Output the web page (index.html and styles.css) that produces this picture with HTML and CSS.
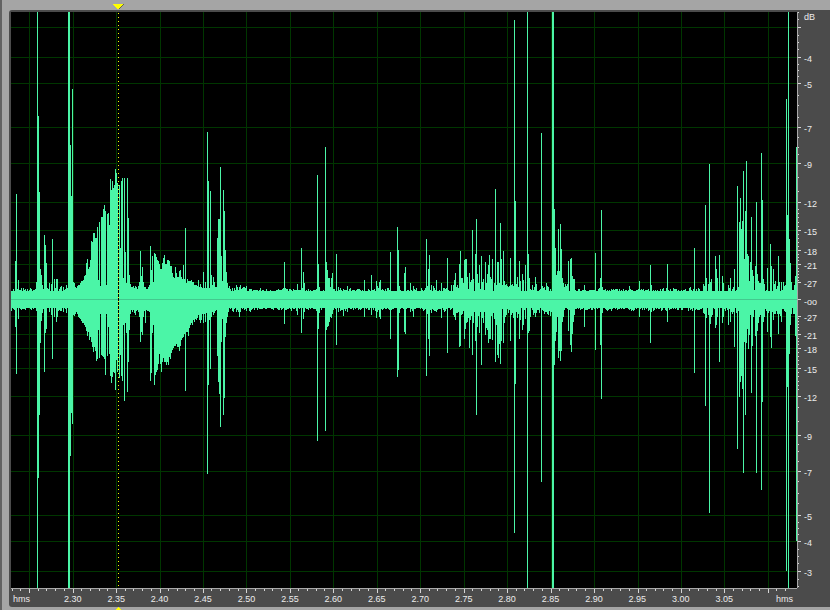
FILE: index.html
```html
<!DOCTYPE html>
<html lang="en">
<head>
<meta charset="utf-8">
<title>Waveform</title>
<link rel="stylesheet" href="styles.css">
</head>
<body>
<main class="panel">
  <section class="plot" aria-label="Audio waveform">
    <svg class="wave" viewBox="11 12 786 576" preserveAspectRatio="none" aria-hidden="true">
      <path class="grid" id="grid"/>
      <path class="signal" id="signal"/>
      <path class="center" d="M11 299h786v1H11z"/>
    </svg>
    <div class="cursor">
      <svg class="handle" viewBox="0 0 11 6" aria-hidden="true"><path class="handle-edge" d="M1 0h10L6 6z"/><path d="M0 0h10L5.500 5h-1z"/></svg>
      <svg class="handle-bottom" viewBox="0 0 5 3" aria-hidden="true"><path d="M2 0h1v1h1v1h1v1H0V2h1V1h1z"/></svg>
    </div>
  </section>
  <aside class="levels">
    <svg class="level-ticks" viewBox="0 12 4 576" preserveAspectRatio="none" aria-hidden="true"><path id="levelTicks"/></svg>
    <div class="level-labels" id="levelLabels"></div>
  </aside>
  <footer class="timeline">
    <svg class="time-ticks" viewBox="11 0 786 5" preserveAspectRatio="none" aria-hidden="true"><path class="axis" d="M11 0h786v1H11z"/><path id="timeTicks"/></svg>
    <div class="time-labels" id="timeLabels"></div>
  </footer>
</main>
<script src="wave.js"></script>
</body>
</html>
```
FILE: styles.css
```css
* {
  box-sizing: border-box;
}

body {
  margin: 0;
  min-height: 100vh;
  display: grid;
  padding: 10px 0 3px 7px;
  border-left: 2px solid #626262;
  background: #a5a5a5;
  color: #ececec;
  font-family: "Liberation Sans", Arial, sans-serif;
  font-size: 9px;
}

.panel {
  display: grid;
  grid-template-columns: minmax(0, 1fr) 33px;
  grid-template-rows: minmax(0, 1fr) 19px;
  padding: 2px 0 0 2px;
  border-radius: 3px 0 0 3px;
  background: #4b4b4b;
}

svg {
  display: block;
  shape-rendering: crispEdges;
}

.plot {
  position: relative;
  min-height: 0;
  background: #000;
}

.wave {
  position: absolute;
  inset: 0;
  width: 100%;
  height: 100%;
}

.grid {
  fill: #003600;
}

.signal {
  fill: #4bf5a7;
}

.center {
  fill: #43c88e;
}

.cursor {
  position: absolute;
  top: 0;
  bottom: 0;
  left: 13.613%;
  width: 1px;
  background: repeating-linear-gradient(to bottom, #000 0 1px, #ff0 1px 2px, #000 2px 4px);
}

.handle,
.handle-bottom {
  position: absolute;
  fill: #ff0;
}

.handle {
  top: -8px;
  left: -5px;
  width: 11px;
  height: 6px;
}

.handle-edge {
  fill: #66664a;
}

.handle-bottom {
  bottom: -22px;
  left: -2px;
  width: 5px;
  height: 3px;
}

.levels {
  display: flex;
  gap: 3px;
  border-left: 1px solid #a8a8a8;
  min-height: 0;
}

.level-ticks {
  width: 3px;
  height: 100%;
  fill: #d5d5d5;
}

.level-labels {
  display: flex;
  flex-direction: column;
}

.level-labels span {
  flex-basis: 0;
  min-height: 0;
  line-height: 10px;
}

.timeline {
  min-width: 0;
}

.time-ticks {
  width: 100%;
  height: 5px;
  fill: #d5d5d5;
}

.axis {
  fill: #a8a8a8;
}

.time-labels {
  display: grid;
  grid-template-columns: 400fr repeat(16, 434fr) 510fr;
  line-height: 12px;
  text-align: center;
}

.time-labels span:first-child {
  padding-left: 2px;
  text-align: left;
}

.time-labels span:last-child {
  padding-right: 4px;
  text-align: right;
}
```
FILE: wave.js
```js
// Columns that rise out of the noise floor: x, top, bottom.
const peaks = `
15 261 327,16 194 374,18 280 319,36 282 311,37 12 588,38 116 478,39 192 415,40 269 343,41 275 321,42 285 313,
44 235 372,45 245 333,46 263 329,49 283 312,51 284 315,52 239 359,54 279 317,56 279 322,57 279 317,60 287 311,61 286 311,63 287 312,66 285 313,
68 12 588,69 12 588,70 145 456,71 196 413,72 89 424,73 282 315,74 283 316,75 287 314,76 288 312,77 286 314,78 285 317,79 285 318,
80 283 319,81 281 321,82 281 323,83 280 323,84 276 325,85 275 327,86 263 331,87 259 336,88 269 332,89 267 340,90 260 337,91 241 342,
92 242 347,93 233 352,94 233 347,95 238 351,96 238 361,97 227 359,98 280 330,99 222 358,100 286 314,101 217 355,102 217 356,103 209 357,
104 205 359,105 211 375,106 285 314,107 214 356,108 213 327,109 225 354,110 179 376,111 190 383,112 181 377,113 188 372,114 185 373,
115 169 390,116 173 360,117 183 372,118 185 360,119 185 378,120 248 355,121 181 376,122 178 381,123 278 325,124 178 401,125 252 323,
126 283 333,127 178 392,128 218 362,129 275 330,130 284 314,
131 287 310,132 287 312,133 286 310,134 288 313,135 286 315,136 287 311,137 289 310,138 286 312,139 282 317,140 251 342,141 276 332,142 267 335,143 282 317,144 287 311,145 287 323,146 289 310,148 287 311,149 285 312,
150 246 381,151 270 373,152 256 333,153 282 325,154 253 385,155 254 375,156 257 372,157 260 370,158 261 364,159 264 354,160 269 364,
161 269 372,162 263 362,163 258 358,164 255 362,165 264 362,166 264 365,167 260 362,168 260 365,169 261 357,170 266 359,171 266 353,
172 273 350,173 277 348,174 278 346,175 267 346,176 273 344,177 277 347,178 277 347,179 271 351,180 270 346,181 277 340,182 279 338,
183 265 337,184 279 334,185 228 391,186 283 332,187 279 332,188 281 336,189 281 328,190 281 325,191 280 323,192 282 325,193 282 320,
194 285 322,195 285 319,196 285 320,197 286 318,198 280 315,199 287 320,200 284 323,201 287 320,202 288 314,203 272 323,204 288 314,
205 282 322,206 288 313,207 132 474,208 181 385,209 288 320,210 191 369,211 275 317,212 285 312,213 277 315,214 282 313,215 287 311,216 287 310,
217 238 356,218 219 382,219 219 394,220 167 427,221 256 342,222 281 319,223 190 415,224 211 398,225 250 337,226 272 323,227 283 317,228 288 312,
236 285 312,239 287 317,240 285 312,246 286 311,284 262 324,285 288 310,297 284 315,301 248 333,303 272 319,304 283 312,317 175 441,318 264 329,319 287 313,
325 147 431,326 262 330,327 270 327,328 278 326,329 278 322,330 287 317,331 278 318,332 273 314,336 254 345,338 287 312,343 289 316,347 286 312,
364 280 317,371 275 315,376 281 318,377 286 312,379 282 317,380 280 319,390 252 339,397 227 377,398 250 370,399 286 313,404 273 332,405 267 334,410 283 312,
413 286 317,426 239 376,427 286 314,428 269 339,429 255 356,431 285 313,436 280 312,441 283 318,447 258 353,453 285 315,455 273 320,457 285 313,459 264 347,460 251 346,
461 278 315,462 278 314,463 283 311,464 260 339,465 259 329,466 259 323,467 277 322,469 273 348,470 282 320,471 280 316,472 230 355,473 279 323,475 254 341,476 219 415,
477 274 327,478 283 316,479 265 333,481 256 365,482 282 318,483 279 323,485 262 335,486 283 328,487 274 330,488 265 343,489 255 339,490 277 339,492 259 340,
494 283 319,495 189 362,496 285 325,497 262 355,498 262 358,499 283 344,500 223 364,501 259 341,503 251 343,504 281 323,510 258 341,511 285 315,513 286 318,514 20 533,
515 201 384,517 277 318,519 261 339,520 281 320,522 274 330,523 280 325,525 265 319,527 12 588,528 254 333,529 278 331,535 277 317,541 133 482,
552 12 588,553 12 588,554 209 365,555 248 341,556 275 332,557 271 317,558 229 358,559 271 351,560 224 361,561 249 351,562 278 322,563 283 317,
568 261 331,570 259 345,571 258 352,572 276 334,573 279 322,574 279 315,584 285 327,595 253 350,600 278 345,601 210 399,602 287 313,
629 286 310,639 281 317,650 265 343,651 285 312,667 264 322,690 287 310,694 248 373,705 205 406,706 278 318,709 164 513,710 282 324,711 279 317,
715 256 328,716 269 325,717 278 317,719 255 362,722 276 323,723 283 317,728 285 325,730 278 322,734 269 347,737 186 449,739 222 397,740 198 382,
741 229 376,742 221 389,743 171 473,744 259 342,745 211 415,746 161 343,747 254 329,748 256 349,749 281 335,750 262 315,751 217 393,752 270 346,
753 276 317,755 266 336,756 202 473,757 274 331,758 281 323,759 283 317,760 283 315,761 153 490,762 200 402,763 279 322,764 284 317,767 268 332,
770 244 337,771 266 348,773 269 320,775 281 314,778 256 334,781 282 322,784 286 311,786 99 571,787 215 387,788 12 588,789 239 354,790 263 325,
791 282 314,795 276 336,796 147 541`.trim().split(/,\s*/).map(row => row.split(' ').map(Number));

// Noise floor strength by region: last x, extra height.
const floors = [[66, 3], [217, 4], [250, 5], [430, 3], [450, 5], [505, 14], [550, 9], [575, 7], [700, 3], [736, 7], [797, 9]];

let seed = 7;
const random = () => (seed = (seed * 16807) % 2147483647) / 2147483647;

const columns = new Map();
for (let x = 11; x < 797; x++) {
  const extra = floors.find(f => x <= f[0])[1];
  const rise = Math.round(random() ** 2 * extra);
  const drop = Math.round(random() ** 2 * extra);
  columns.set(x, [291 - rise, 308 + drop]);
}
peaks.forEach(([x, top, bottom]) => columns.set(x, [top, bottom]));

const box = (x, y, w, h) => `M${x} ${y}h${w}v${h}h${-w}z`;
const draw = (id, d) => document.getElementById(id).setAttribute('d', d);

draw('signal', [...columns].map(([x, [a, b]]) => box(x, a, 1, b - a)).join(''));

const times = [29, 73, 116, 160, 203, 246, 290, 333, 377, 420, 464, 507, 551, 594, 638, 681, 724, 768];
const upper = [27, 57, 83, 127, 163, 202, 230, 250, 264, 282];
const lower = [316, 334, 348, 368, 396, 435, 471, 515, 541, 571];
draw('grid', times.map(x => box(x, 12, 1, 576)).join('') +
  [...upper, ...lower].map(y => box(11, y, 786, 1)).join(''));

const minor = [12, 19, 35, 42, 49, 64, 70, 76, 95, 105, 117, 137, 147, 154, 177, 191, 209, 213, 217, 222, 226,
  234, 238, 242, 246, 254, 257, 260, 268, 271, 274, 277, 280];
draw('levelTicks', [...upper, 299, ...lower].map(y => box(0, y, 4, 1)).join('') +
  minor.map(y => box(0, y, 1, 1) + box(0, 598 - y, 1, 1)).join(''));

let ticks = '';
for (let i = -2; i < 88; i++) {
  const major = i % 5 === 0;
  const x = major ? times[i / 5] : Math.round(29 + i * 8.69);
  ticks += box(x, 1, 1, major ? 4 : 2);
}
draw('timeTicks', ticks);

const levels = [['dB', 12], ['-4', 54], ['-5', 80], ['-7', 124], ['-9', 160], ['-12', 199], ['-15', 227], ['-18', 247],
  ['-21', 261], ['-27', 279], ['-oo', 297], ['-27', 313], ['-21', 331], ['-18', 345], ['-15', 365], ['-12', 393],
  ['-9', 432], ['-7', 468], ['-5', 512], ['-4', 538], ['-3', 568]];
levels.forEach(([text, y], i) => {
  const label = document.createElement('span');
  label.textContent = text;
  label.style.flexGrow = (i + 1 < levels.length ? levels[i + 1][1] : 588) - y;
  document.getElementById('levelLabels').append(label);
});

const names = ['hms'];
for (let t = 230; t <= 305; t += 5) names.push((t / 100).toFixed(2));
names.push('hms');
names.forEach(text => {
  const label = document.createElement('span');
  label.textContent = text;
  document.getElementById('timeLabels').append(label);
});
```
